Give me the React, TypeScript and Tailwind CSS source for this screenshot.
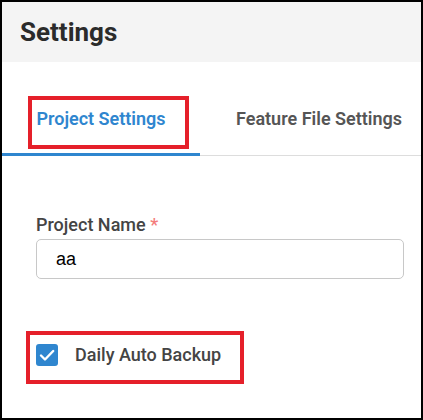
import { useState } from "react";

const font = { fontFamily: "Roboto, 'Liberation Sans', sans-serif" };

export default function App() {
  const [tab, setTab] = useState("project");
  const [backup, setBackup] = useState(true);
  const [name, setName] = useState("aa");

  return (
    <div
      className="relative box-border h-[420px] w-[423px] overflow-hidden border-2 border-black bg-white"
      style={font}
    >
      {/* header */}
      <div className="flex h-[60px] items-center bg-[#f4f4f4] pl-[18px]">
        <h1 className="text-[26px] font-bold text-[#2b2b2b]">Settings</h1>
      </div>

      {/* tabs */}
      <div className="mt-[23px] flex border-b border-[#dddddd] whitespace-nowrap">
        <button
          onClick={() => setTab("project")}
          className={
            "-mb-px w-[198px] shrink-0 border-b-[3px] pt-[20px] pb-[21px] text-center text-[18px] leading-[27px] font-semibold " +
            (tab === "project"
              ? "border-[#2f86cf] text-[#2f86cf]"
              : "border-transparent text-[#555555]")
          }
        >
          Project Settings
        </button>
        <button
          onClick={() => setTab("feature")}
          className={
            "-mb-px shrink-0 border-b-[3px] px-[36px] pt-[20px] pb-[21px] text-[18px] leading-[27px] font-semibold " +
            (tab === "feature"
              ? "border-[#2f86cf] text-[#2f86cf]"
              : "border-transparent text-[#555555]")
          }
        >
          Feature File Settings
        </button>
      </div>

      {/* form */}
      <div className="ml-[34px] mt-[55px] w-[368px]">
        <label className="block text-[18px] leading-[27px] font-medium text-[#444444]">
          Project Name <span className="text-[#f47c7c]">*</span>
        </label>
        <input
          value={name}
          onChange={(e) => setName(e.target.value)}
          className="mt-px box-border h-[40px] w-full rounded-[5px] border border-[#c8c8c8] pl-[19px] text-[18px] text-black outline-none"
          style={{ fontFamily: "'Liberation Sans', Arial, sans-serif" }}
        />

        <label className="mt-[62px] flex cursor-pointer items-center gap-[17px]">
          <span
            onClick={() => setBackup(!backup)}
            className={
              "flex h-[22px] w-[22px] items-center justify-center rounded-[3px] " +
              (backup ? "bg-[#2f86cf]" : "border border-[#999] bg-white")
            }
          >
            {backup && (
              <svg width="22" height="22" viewBox="0 0 22 22" fill="none">
                <path
                  d="M5 11.5l4 4L17.2 7"
                  stroke="white"
                  strokeWidth="2.4"
                  strokeLinecap="round"
                  strokeLinejoin="round"
                />
              </svg>
            )}
          </span>
          <span className="text-[18px] leading-[27px] font-medium text-[#444444]">
            Daily Auto Backup
          </span>
        </label>
      </div>

      {/* annotation boxes */}
      <div className="pointer-events-none absolute left-[26px] top-[94px] h-[53px] w-[161px] border-[4px] border-[#e5202a]" />
      <div className="pointer-events-none absolute left-[24px] top-[329px] h-[53px] w-[218px] border-[4px] border-[#e5202a]" />
    </div>
  );
}
